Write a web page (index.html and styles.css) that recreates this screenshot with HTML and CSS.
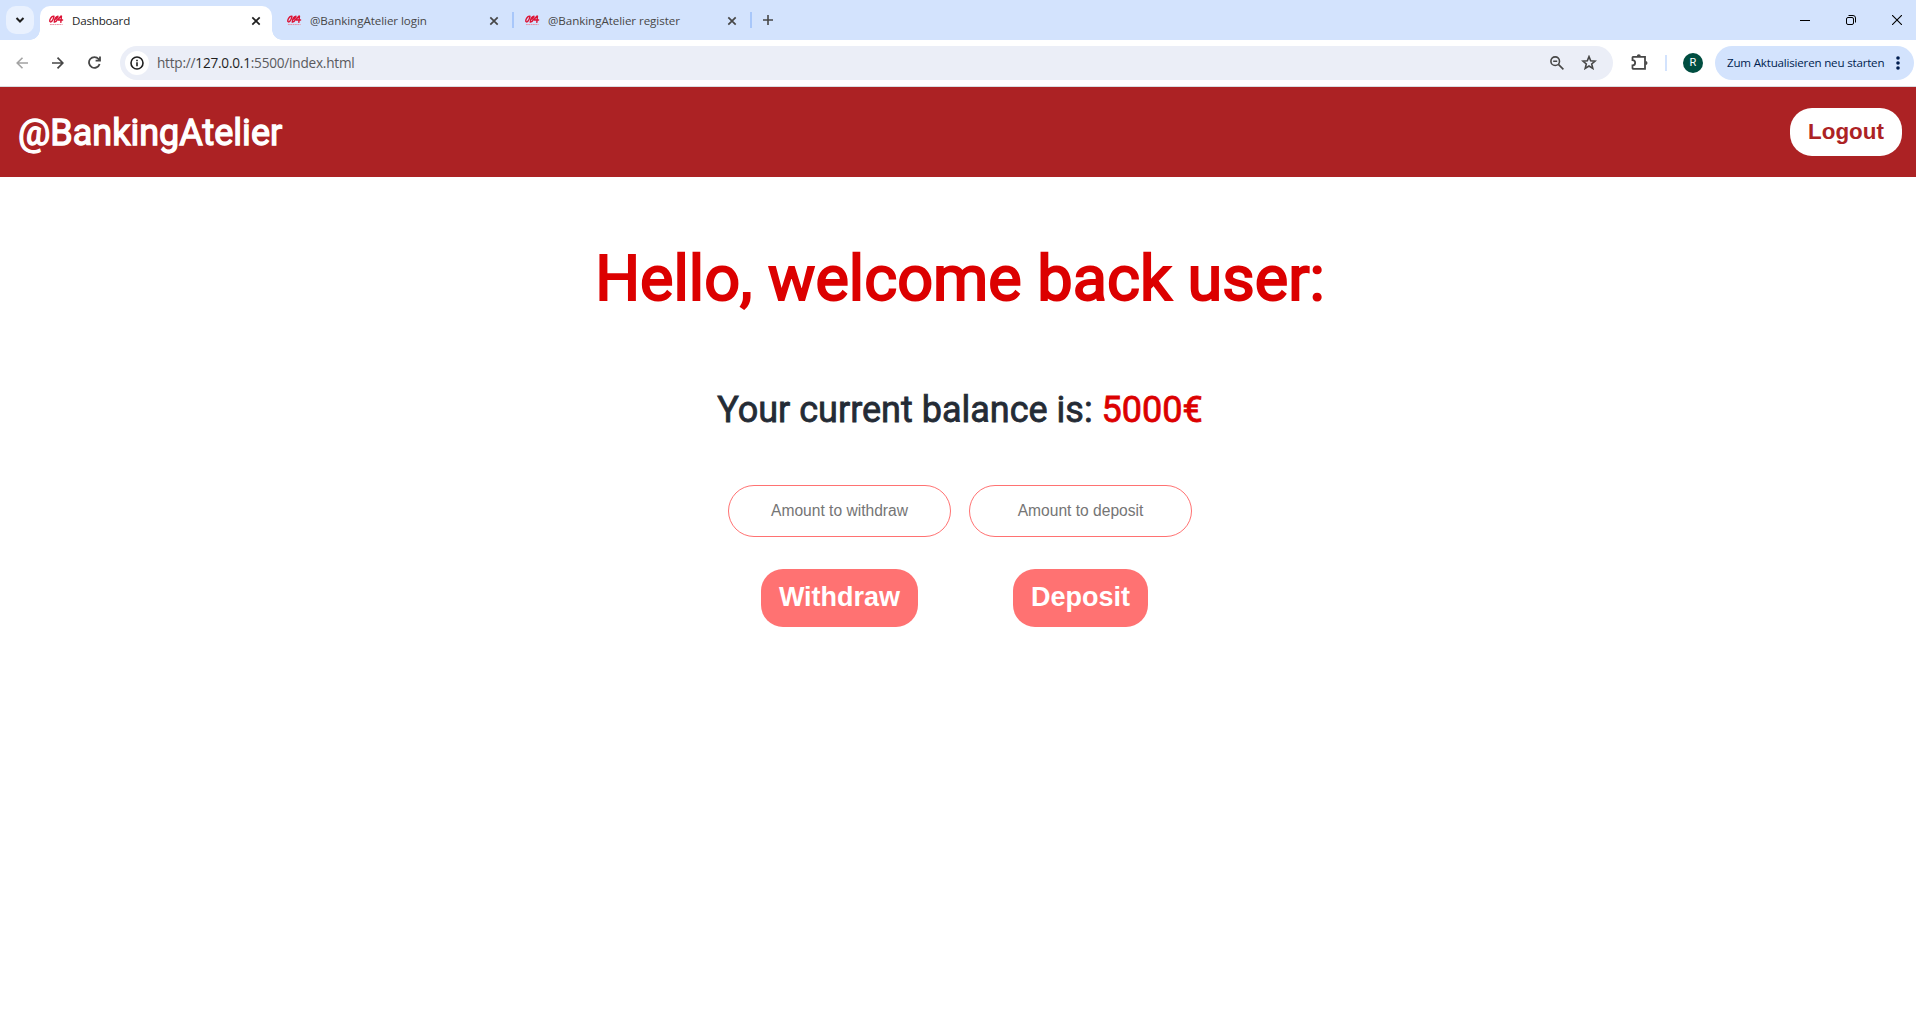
FILE: index.html
```html
<!DOCTYPE html>
<html lang="en">
<head>
<meta charset="utf-8">
<title>Dashboard</title>
<link rel="stylesheet" href="styles.css">
</head>
<body>
<svg width="0" height="0" class="defs">
  <symbol id="fav" viewBox="0 0 16 11"><g fill="none" stroke="#dc1436" stroke-width="1.500" stroke-linecap="round"><path d="M4.500 .9C2.200 1.500 .5 4.500 .9 6.500C2 8.200 4.600 5.500 5.300 1"/><path d="M9.600 1C7.300 1.500 5.800 4.500 5.700 7.200C7.500 7.500 8.200 6.200 9 4.500M7 4L9.500 2.500"/><path d="M12.800 .8C11.300 2 10.200 3.500 10 5H14.500M13.300 1L12.600 7.500"/></g><path d="M1 9.800H14.500" stroke="#e88da0" stroke-width="1" stroke-dasharray="2 .5"/></symbol>
  <symbol id="x" viewBox="0 0 10 10"><path d="M1.300 1.300 8.700 8.700M8.700 1.300 1.300 8.700" fill="none" stroke="currentColor" stroke-width="1.700"/></symbol>
</svg>

<div class="tabstrip">
  <button class="search"><svg width="10" height="8" viewBox="0 0 10 8"><path d="M1.500 2 5 5.500 8.500 2" fill="none" stroke="#1f1f1f" stroke-width="2"/></svg></button>
  <div class="tab active"><svg class="fav"><use href="#fav"/></svg><span>Dashboard</span><svg class="x"><use href="#x"/></svg></div>
  <div class="tab"><svg class="fav"><use href="#fav"/></svg><span>@BankingAtelier login</span><svg class="x"><use href="#x"/></svg></div>
  <i class="sep"></i>
  <div class="tab third"><svg class="fav"><use href="#fav"/></svg><span>@BankingAtelier register</span><svg class="x"><use href="#x"/></svg></div>
  <i class="sep"></i>
  <svg class="plus" width="10" height="10" viewBox="0 0 10 10"><path d="M5 0V10M0 5H10" stroke="#474747" stroke-width="1.600"/></svg>
  <div class="window">
    <svg width="10" height="10"><path d="M0 5.500H10" stroke="#000"/></svg>
    <svg width="10" height="10" fill="none" stroke="#000"><rect x=".5" y="2.500" width="7" height="7" rx="1.500"/><path d="M2.500 .5H7A2.500 2.500 0 0 1 9.500 3V7.500"/></svg>
    <svg width="10" height="10"><path d="M0 0 10 10M10 0 0 10" stroke="#000" stroke-width="1.100"/></svg>
  </div>
</div>

<div class="toolbar">
  <div class="nav">
    <svg width="12" height="12" viewBox="0 0 12 12" fill="none" stroke="#a3a3a3" stroke-width="1.600"><path d="M12 6H1M6.500 .7 1.200 6 6.500 11.300"/></svg>
    <svg width="12" height="12" viewBox="0 0 12 12" fill="none" stroke="#474747" stroke-width="1.700"><path d="M0 6H11M5.500 .7 10.800 6 5.500 11.300"/></svg>
    <svg width="13" height="13" viewBox="0 0 13 13" fill="none" stroke="#474747" stroke-width="1.800"><path d="M11.600 8A5.400 5.400 0 1 1 10.600 3L12 4.500M12 .4V4.700H7.600"/></svg>
  </div>
  <div class="omnibox">
    <span class="info"><svg width="14" height="14" viewBox="0 0 14 14"><circle cx="7" cy="7" r="6" fill="none" stroke="#1f1f1f" stroke-width="1.600"/><path d="M7 6.200V10.200M7 3.700V5.200" stroke="#1f1f1f" stroke-width="1.600"/></svg></span>
    <span class="url">http://<b>127.0.0.1</b>:5500/index.html</span>
    <svg class="lens" width="14" height="14" viewBox="0 0 14 14" fill="none" stroke="#474747" stroke-width="1.600"><circle cx="5.200" cy="5.200" r="4.300"/><path d="M3.200 5.200H7.200M8.400 8.400 13.400 13.400"/></svg>
    <svg width="16" height="15" viewBox="0 0 16 15" fill="none" stroke="#474747" stroke-width="1.600"><path d="M8 1.600 9.700 5.700 14.100 6.100 10.700 9 11.800 13.400 8 11 4.200 13.400 5.300 9 1.900 6.100 6.300 5.700Z"/></svg>
  </div>
  <svg class="puzzle" width="17" height="17" viewBox="0 0 17 17"><path d="M2 2.800H14V14.800H2Q1.500 14.800 1.500 14V11.500A2.500 2.500 0 0 0 1.500 6.200V3.500Q1.500 2.800 2 2.800Z" fill="none" stroke="#474747" stroke-width="1.800"/><path d="M5.800 2.200A2 2 0 0 1 9.800 2.200ZM14.500 7A2 2 0 0 1 14.500 11Z" fill="#474747"/></svg>
  <i class="divider"></i>
  <span class="avatar">R</span>
  <button class="update"><span>Zum Aktualisieren neu starten</span><svg width="4" height="14" fill="#001d4f"><circle cx="2" cy="2" r="1.800"/><circle cx="2" cy="7" r="1.800"/><circle cx="2" cy="12" r="1.800"/></svg></button>
</div>

<header class="header">
  <h1 class="brand">@BankingAtelier</h1>
  <button class="logout">Logout</button>
</header>

<main class="main">
  <h2 class="welcome">Hello, welcome back user:</h2>
  <p class="balance">Your current balance is: <span>5000€</span></p>
  <div class="actions">
    <div class="action"><input type="text" placeholder="Amount to withdraw"><button>Withdraw</button></div>
    <div class="action"><input type="text" placeholder="Amount to deposit"><button>Deposit</button></div>
  </div>
</main>
</body>
</html>
```
FILE: styles.css
```css
* { box-sizing: border-box; }
body { margin: 0; height: 1026px; overflow: hidden; background: #fff; font-family: Roboto, sans-serif; }
button { border: 0; padding: 0; font-family: inherit; }
svg { display: block; flex: none; }
.defs { position: absolute; }

.tabstrip { height: 40px; background: #d3e3fd; display: flex; align-items: center; padding-left: 6px; font: 11.600px/16px "Open Sans", sans-serif; letter-spacing: -.06px; color: #474747; }
.search { width: 28px; height: 28px; border-radius: 10px; background: #e9f1fe; display: flex; align-items: center; justify-content: center; margin-right: 6px; }
.tab { width: 232px; height: 34px; margin-top: 6px; padding: 0 11px 5px 9px; display: flex; align-items: center; position: relative; white-space: nowrap; }
.tab + .tab { margin-left: 6px; width: 234px; padding-right: 13px; }
.tab.third { width: 236px; padding-left: 11px; padding-right: 13px; }
.tab.active { background: #fff; border-radius: 10px 10px 0 0; color: #1f1f1f; letter-spacing: -.2px; }
.tab.active::before, .tab.active::after { content: ""; position: absolute; bottom: 0; width: 10px; height: 10px; }
.tab.active::before { left: -10px; background: radial-gradient(circle at 0 0, transparent 9.500px, #fff 10px); }
.tab.active::after { right: -10px; background: radial-gradient(circle at 100% 0, transparent 9.500px, #fff 10px); }
.fav { width: 15px; height: 11px; margin-right: 8px; }
.x { width: 10px; height: 10px; margin-left: auto; }
.sep { width: 2px; height: 16px; background: #a8c7fa; flex: none; }
.plus { margin-left: 11px; }
.window { margin-left: auto; display: flex; gap: 36px; padding-right: 14px; }

.toolbar { height: 47px; padding: 6px 2px 7px 16px; border-bottom: 1px solid #dadce0; display: flex; align-items: center; background: #fff; }
.nav { display: flex; align-items: center; gap: 24px; width: 104px; }
.omnibox { width: 1493px; height: 34px; border-radius: 17px; background: #ebeef7; display: flex; align-items: center; padding: 0 16px 0 5px; }
.info { width: 24px; height: 24px; border-radius: 50%; background: #fff; display: flex; align-items: center; justify-content: center; margin-right: 8px; }
.url { font: 13.600px/20px "Open Sans", sans-serif; letter-spacing: -.22px; color: #5a5a5e; margin-right: auto; }
.url b { font-weight: 400; color: #1f1f1f; }
.lens { margin-right: 17px; }
.puzzle { margin-left: 18px; }
.divider { width: 2px; height: 16px; background: #d3e3fd; margin: 0 16px 0 17px; }
.avatar { width: 20px; height: 20px; border-radius: 50%; background: #004d40; color: #fff; font-size: 11px; line-height: 20px; text-align: center; }
.update { margin-left: auto; width: 199px; height: 34px; border-radius: 17px; background: #d3e3fd; color: #001d4f; display: flex; align-items: center; padding: 0 14px 0 12px; justify-content: space-between; font: 11.600px/16px "Open Sans", sans-serif; letter-spacing: -.2px; white-space: nowrap; }

.header { height: 90px; background: #ac2224; display: flex; align-items: center; justify-content: space-between; padding: 0 14px 0 18px; }
.brand { margin: 0; padding-top: 2px; font-size: 36px; line-height: 42px; font-weight: 400; color: #fff; -webkit-text-stroke: 1.300px #fff; }
.logout { width: 112px; height: 48px; border-radius: 22px; background: #fff; color: #ac2224; font: bold 22.400px/26px "Liberation Sans", Arial, sans-serif; }

.main { display: flex; flex-direction: column; align-items: center; padding: 64px 0 0 4px; }
.welcome { margin: 0; font-size: 63px; line-height: 76px; font-weight: 400; color: #dc0000; -webkit-text-stroke: 2px #dc0000; }
.balance { margin: 72px 0 0; font-size: 36px; line-height: 42px; color: #242b35; -webkit-text-stroke: .8px; }
.balance span { color: #dc0000; }
.actions { display: flex; gap: 18px; margin-top: 54px; }
.action { display: flex; flex-direction: column; align-items: center; gap: 32px; }
.action input { width: 223px; height: 52px; border: 1px solid #ff7272; border-radius: 26px; background: #fff; padding: 0; text-align: center; font: 15.600px "Liberation Sans", Arial, sans-serif; }
.action input::placeholder { color: #757575; }
.action button { height: 58px; padding: 0 18px 3px; border-radius: 22px; background: #ff7272; color: #fff; font: bold 27px/32px "Liberation Sans", Arial, sans-serif; }
```
